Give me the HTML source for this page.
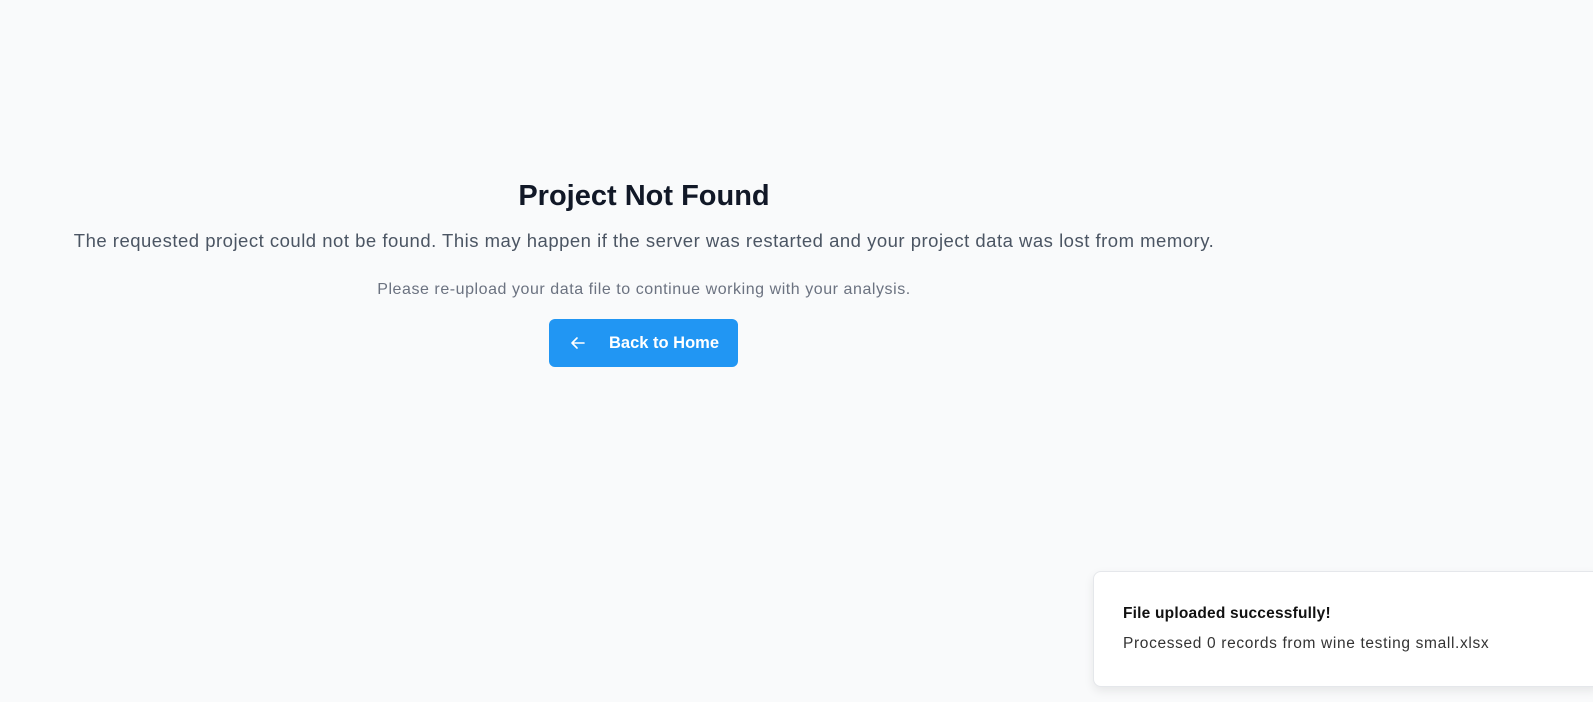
<!DOCTYPE html>
<html><head><style>
html,body{margin:0;padding:0;width:1593px;height:702px;background:#f9fafb;overflow:hidden;font-family:"Liberation Sans",sans-serif;}
.c{position:absolute;left:0;width:1288px;text-align:center;white-space:nowrap;}
h1{position:absolute;left:0;width:1288px;text-align:center;margin:0;top:180px;font-size:29px;font-weight:bold;color:#111827;}
.p1{top:230px;font-size:18.5px;color:#4b5563;letter-spacing:0.5px;}
.p2{top:281px;font-size:16px;color:#6b7280;letter-spacing:0.55px;}
.btn{position:absolute;left:549px;top:319px;width:189px;height:48px;background:#2196f3;border-radius:6px;color:#fff;font-weight:bold;font-size:16.5px;}
.btn span{position:absolute;left:60px;top:15px;}
.btn svg{position:absolute;left:21px;top:16px;}
.toast{position:absolute;left:1093px;top:571px;width:506px;height:114px;background:#fff;border:1px solid #e5e7eb;border-radius:8px;box-shadow:0 4px 10px rgba(0,0,0,.08);}
.t1{position:absolute;left:29px;top:33px;font-size:15.5px;font-weight:bold;color:#111;letter-spacing:0.2px;}
.t2{position:absolute;left:29px;top:63px;font-size:15.5px;color:#333;letter-spacing:0.65px;}
</style></head><body>
<h1>Project Not Found</h1>
<div class="c p1">The requested project could not be found. This may happen if the server was restarted and your project data was lost from memory.</div>
<div class="c p2">Please re-upload your data file to continue working with your analysis.</div>
<div class="btn"><svg width="16" height="16" viewBox="0 0 16 16" fill="none" stroke="#fff" stroke-width="1.6" stroke-linecap="round" stroke-linejoin="round"><path d="M14 8H2M7 3L2 8l5 5"/></svg><span>Back to Home</span></div>
<div class="toast"><div class="t1">File uploaded successfully!</div><div class="t2">Processed 0 records from wine testing small.xlsx</div></div>
</body></html>
